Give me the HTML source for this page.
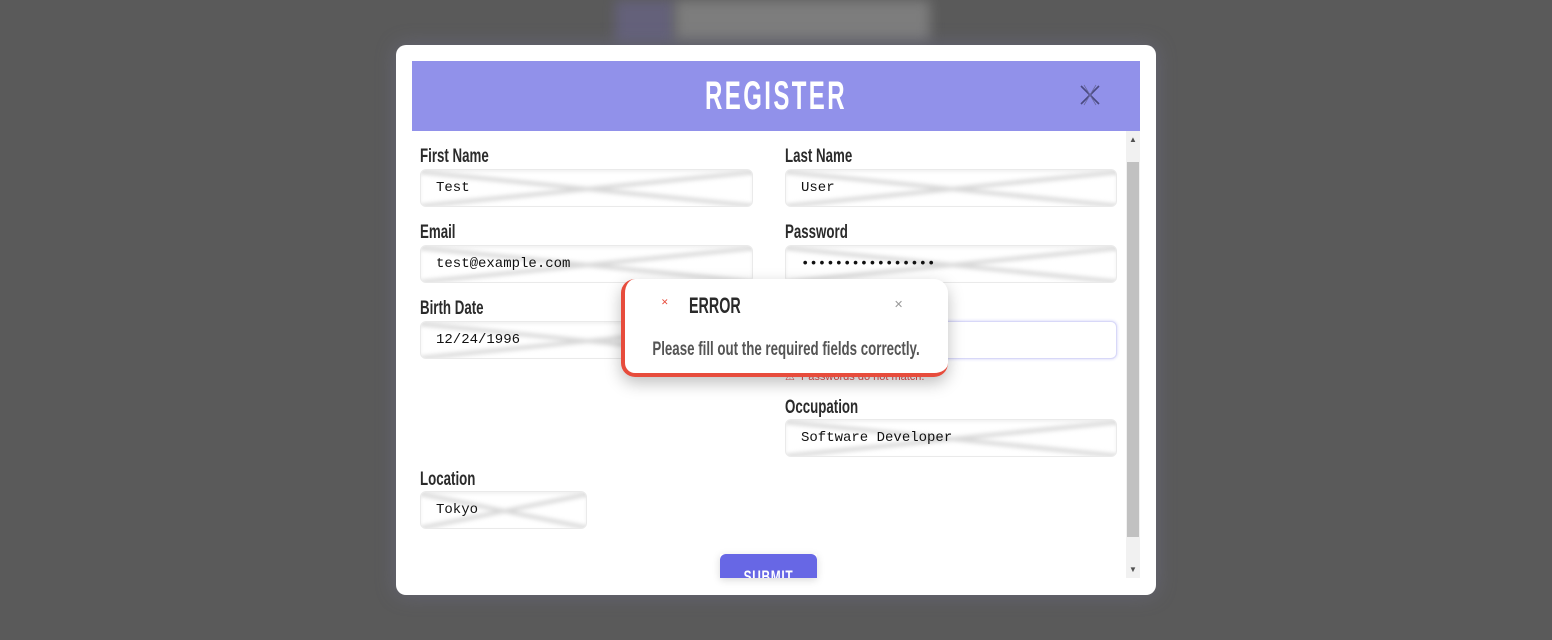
<!DOCTYPE html>
<html><head><meta charset="utf-8"><style>
*{box-sizing:border-box;margin:0;padding:0}
body{width:1552px;height:640px;background:#5a5a5a;position:relative;overflow:hidden;font-family:"Liberation Sans",sans-serif}
.abs{position:absolute}
.modal{left:396px;top:45px;width:760px;height:550px;background:#fff;border-radius:10px;box-shadow:0 0 20px rgba(120,120,160,.4)}
.hdr{left:412px;top:61px;width:728px;height:70px;background:#9191ea}
.title{left:412px;top:74px;width:728px;text-align:center;color:#fff;font-weight:bold;font-size:40px;letter-spacing:4px;transform:scaleX(0.6);white-space:nowrap}
.lbl{font-weight:bold;font-size:19px;color:#2b2b2b;transform:scaleX(0.7);transform-origin:left;white-space:nowrap}
.inp{height:38px;border-radius:6px;border:1px solid #eaeaea;background:#fff;overflow:hidden;box-shadow:inset 0 2px 3px rgba(0,0,0,.06)}
.inp svg{position:absolute;left:0;top:0}
.inp span{position:absolute;left:15px;top:10px;font-family:"Liberation Mono",monospace;font-size:14px;color:#111}
.toast{left:621px;top:279px;width:327px;height:98px;background:#fff;border-radius:14px;border-left:4px solid #e74c3c;border-bottom:4px solid #e74c3c;box-shadow:0 6px 16px rgba(0,0,0,.25)}
</style></head><body>
<div class="abs" style="left:615px;top:0;width:60px;height:42px;background:#64617a;filter:blur(6px)"></div>
<div class="abs" style="left:675px;top:0;width:255px;height:40px;background:#7d7d7d;filter:blur(6px)"></div>
<div class="abs modal"></div>
<div class="abs hdr"></div>
<div class="abs title">REGISTER</div>
<svg class="abs" style="left:1078px;top:83px" width="24" height="24"><path d="M3 3L21 21M21 3L3 21" stroke="#4a4a80" stroke-width="1.6"/><path d="M6 2L18 22M18 2L6 22" stroke="#6a6aa0" stroke-width="0.8"/></svg>
<div class="abs" style="left:1126px;top:131px;width:14px;height:447px;background:#f1f1f1"></div>
<div class="abs" style="left:1127px;top:162px;width:12px;height:375px;background:#c1c1c1"></div>
<div class="abs" style="left:1129px;top:135px;font-size:8px;color:#505050">▲</div>
<div class="abs" style="left:1129px;top:565px;font-size:8px;color:#505050">▼</div>

<div class="abs lbl" style="left:420px;top:146px">First Name</div>
<div class="abs lbl" style="left:785px;top:146px">Last Name</div>
<div class="abs lbl" style="left:420px;top:222px">Email</div>
<div class="abs lbl" style="left:785px;top:222px">Password</div>
<div class="abs lbl" style="left:420px;top:298px">Birth Date</div>
<div class="abs lbl" style="left:785px;top:397px">Occupation</div>
<div class="abs lbl" style="left:420px;top:469px">Location</div>

<div class="abs inp" style="left:420px;top:169px;width:333px"><svg width="333" height="38"><g stroke="#d8d8d8" stroke-width="4" style="filter:blur(2px)"><path d="M0 2L333 36M333 2L0 36"/></g></svg><span>Test</span></div>
<div class="abs inp" style="left:785px;top:169px;width:332px"><svg width="332" height="38"><g stroke="#d8d8d8" stroke-width="4" style="filter:blur(2px)"><path d="M0 2L332 36M332 2L0 36"/></g></svg><span>User</span></div>
<div class="abs inp" style="left:420px;top:245px;width:333px"><svg width="333" height="38"><g stroke="#d8d8d8" stroke-width="4" style="filter:blur(2px)"><path d="M0 2L333 36M333 2L0 36"/></g></svg><span>test@example.com</span></div>
<div class="abs inp" style="left:785px;top:245px;width:332px"><svg width="332" height="38"><g stroke="#d8d8d8" stroke-width="4" style="filter:blur(2px)"><path d="M0 2L332 36M332 2L0 36"/></g></svg><span>••••••••••••••••</span></div>
<div class="abs inp" style="left:420px;top:321px;width:333px"><svg width="333" height="38"><g stroke="#d8d8d8" stroke-width="4" style="filter:blur(2px)"><path d="M0 2L333 36M333 2L0 36"/></g></svg><span>12/24/1996</span></div>
<div class="abs inp" style="left:785px;top:321px;width:332px;border-color:#d8d8f8;box-shadow:0 0 3px #d0d0f8"><span>••••••••••••••••</span></div>
<div class="abs" style="left:785px;top:370px;font-size:11px;color:#e05050">⚠ &nbsp;Passwords do not match.</div>
<div class="abs inp" style="left:785px;top:419px;width:332px"><svg width="332" height="38"><g stroke="#d8d8d8" stroke-width="4" style="filter:blur(2px)"><path d="M0 2L332 36M332 2L0 36"/></g></svg><span>Software Developer</span></div>
<div class="abs inp" style="left:420px;top:491px;width:167px"><svg width="167" height="38"><g stroke="#d8d8d8" stroke-width="4" style="filter:blur(2px)"><path d="M0 2L167 36M167 2L0 36"/></g></svg><span>Tokyo</span></div>

<div class="abs" style="left:720px;top:554px;width:97px;height:24px;overflow:hidden;box-shadow:0 2px 8px rgba(0,0,0,.15)"><div style="width:97px;height:40px;background:#6767e5;border-radius:6px;color:#fff;font-weight:bold;font-size:17px;letter-spacing:1px;text-align:center;padding-top:13px"><div style="transform:scaleX(0.7)">SUBMIT</div></div></div>

<div class="abs toast"></div>
<div class="abs" style="left:661px;top:297px;font-size:9px;color:#e74c3c">✕</div>
<div class="abs" style="left:689px;top:293px;font-weight:bold;font-size:22px;color:#2a2a2a;transform:scaleX(0.65);transform-origin:left">ERROR</div>
<div class="abs" style="left:894px;top:298px;font-size:11px;color:#999">✕</div>
<div class="abs" style="left:586px;top:339px;width:400px;text-align:center;font-weight:bold;font-size:19px;color:#555;white-space:nowrap;transform:scaleX(0.7)">Please fill out the required fields correctly.</div>
</body></html>
